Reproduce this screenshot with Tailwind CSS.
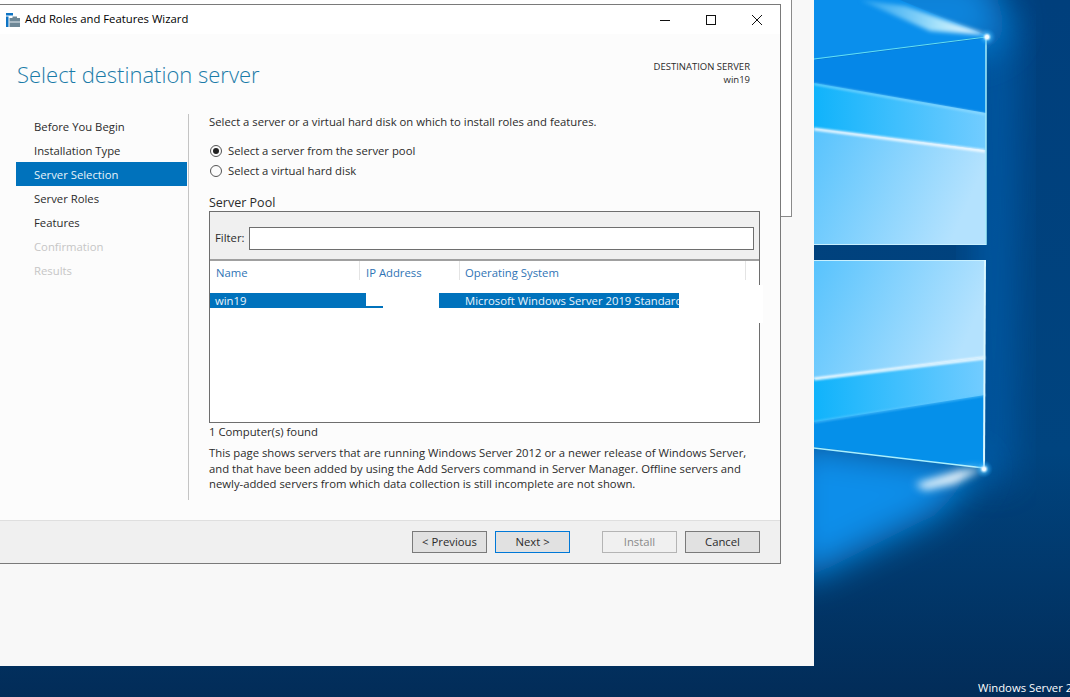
<!DOCTYPE html>
<html lang="en">
<head>
    <meta charset="UTF-8">
    <title>Add Roles and Features Wizard</title>
    <script src="https://cdn.jsdelivr.net/npm/@tailwindcss/browser@4"></script>
</head>
<body class="relative w-[1070px] h-[697px] overflow-hidden bg-[#02386f] font-['Open_Sans',sans-serif] text-[11.3px] text-[#2b2b2b]">

    <!-- Desktop wallpaper -->
    <svg class="absolute inset-0" width="1070" height="697" viewBox="0 0 1070 697">
        <defs>
            <linearGradient id="base" x1="0" y1="0" x2="0" y2="1">
                <stop offset="0" stop-color="#003f7c"/>
                <stop offset="0.65" stop-color="#00447f"/>
                <stop offset="1" stop-color="#022c58"/>
            </linearGradient>
            <linearGradient id="band2" x1="0" y1="0" x2="1" y2="0">
                <stop offset="0" stop-color="#10b3fb"/>
                <stop offset="1" stop-color="#72ccff"/>
            </linearGradient>
            <linearGradient id="band3" x1="0" y1="0" x2="1" y2="0.3">
                <stop offset="0" stop-color="#58c3fd"/>
                <stop offset="1" stop-color="#b4e2fe"/>
            </linearGradient>
            <linearGradient id="streak" x1="0" y1="0" x2="1" y2="0">
                <stop offset="0" stop-color="#4db8f5" stop-opacity="0.5"/>
                <stop offset="0.6" stop-color="#a6e2fb"/>
                <stop offset="1" stop-color="#ffffff"/>
            </linearGradient>
            <radialGradient id="flare" cx="0.5" cy="0.5" r="0.5">
                <stop offset="0" stop-color="#ffffff"/>
                <stop offset="0.2" stop-color="#e8f8ff"/>
                <stop offset="0.5" stop-color="#4cc0ff" stop-opacity="0.45"/>
                <stop offset="1" stop-color="#0a8de8" stop-opacity="0"/>
            </radialGradient>
            <filter id="blur30" x="-50%" y="-50%" width="200%" height="200%"><feGaussianBlur stdDeviation="18"/></filter>
            <filter id="blur6" x="-50%" y="-50%" width="200%" height="200%"><feGaussianBlur stdDeviation="4"/></filter>
            <filter id="blur2" x="-20%" y="-50%" width="140%" height="200%"><feGaussianBlur stdDeviation="2"/></filter>
            <filter id="blur1" x="-10%" y="-100%" width="120%" height="300%"><feGaussianBlur stdDeviation="1"/></filter>
        </defs>
        <rect width="1070" height="697" fill="url(#base)"/>
        <polygon points="976,20 1016,20 1010,480 976,480" fill="#0060b0" opacity="0.8" filter="url(#blur30)"/>

        <!-- glow above the upper pane and under the lower pane -->
        <polygon points="814,-30 985,-30 1010,30 986,50 814,70" fill="#0a84dc" filter="url(#blur30)"/>
        <polygon points="790,440 984,466 935,515 814,575 790,575" fill="#0a8eea" filter="url(#blur30)"/>

        <!-- upper pane -->
        <polygon points="814,0 900,0 988,36 814,60" fill="#0a8fec"/>
        <polygon points="860,0 905,6 988,35 930,31" fill="url(#streak)" filter="url(#blur2)"/>
        <polygon points="814,60 986,38 986,245 814,245" fill="#0587e8"/>
        <polygon points="814,83 986,113 986,150 814,128" fill="url(#band2)"/>
        <polygon points="814,128 986,150 986,245 814,245" fill="url(#band3)"/>
        <line x1="814" y1="59" x2="986" y2="37" stroke="#63e1f5" stroke-width="1"/>
        <line x1="814" y1="84" x2="985" y2="114" stroke="#a8e6ff" stroke-width="2" opacity="0.6" filter="url(#blur1)"/>
        <line x1="814" y1="129" x2="985" y2="151" stroke="#ffffff" stroke-width="3" opacity="0.85" filter="url(#blur1)"/>
        <line x1="986" y1="38" x2="986" y2="245" stroke="#a4ecfa" stroke-width="1.5"/>
        <line x1="814" y1="244.5" x2="986" y2="244.5" stroke="#c8f0ff" stroke-width="1"/>
        <circle cx="987" cy="37" r="9" fill="url(#flare)"/>

        <!-- lower pane -->
        <polygon points="814,260 985,260 985,468 814,447" fill="#0590ea"/>
        <polygon points="814,260 985,260 985,358 814,380" fill="url(#band3)"/>
        <polygon points="814,379 985,357 985,395 814,422" fill="url(#band2)"/>
        <line x1="814" y1="422" x2="985" y2="395" stroke="#5ec8ff" stroke-width="2" opacity="0.7" filter="url(#blur1)"/>
        <line x1="814" y1="379" x2="985" y2="358" stroke="#ffffff" stroke-width="3" opacity="0.9" filter="url(#blur1)"/>
        <line x1="814" y1="260.5" x2="985" y2="260.5" stroke="#c8f0ff" stroke-width="1"/>
        <line x1="985" y1="260" x2="984" y2="468" stroke="#d9f7ff" stroke-width="2"/>
        <line x1="814" y1="448" x2="984" y2="468" stroke="#a8f0ff" stroke-width="1.5"/>
        <polygon points="915,484 960,470 984,468 955,484 925,490" fill="#f2fbff" opacity="0.95" filter="url(#blur6)"/>
        <circle cx="984" cy="469" r="9" fill="url(#flare)"/>
    </svg>

    <div class="absolute left-[978px] top-[680px] text-white whitespace-nowrap">Windows Server 2</div>

    <!-- Server Manager behind -->
    <div class="absolute left-0 top-0 w-[814px] h-[666px] bg-[#f8f8f8]">
        <div class="absolute left-0 top-0 w-[792px] h-[217px] bg-white border-r border-b border-[#8a8a8a]"></div>
    </div>

    <!-- Wizard window -->
    <div class="absolute left-[-1px] top-[4px] w-[782px] h-[560px] flex flex-col bg-[#fcfcfc] border border-[#7a7a7a]">

        <div class="h-[29px] flex items-center bg-white shrink-0">
            <svg class="ml-[6px] w-[14px] h-[14px]" viewBox="0 0 14 14">
                <rect x="0" y="0" width="7" height="2.5" fill="#0f74c4"/>
                <rect x="0" y="3.5" width="2.5" height="10.5" fill="#0f74c4"/>
                <rect x="3.5" y="5" width="10.5" height="9" fill="#6d8796"/>
                <rect x="6.5" y="3.5" width="4.5" height="1.5" fill="#6d8796"/>
                <rect x="3.5" y="8.5" width="10.5" height="1" fill="#e8eef2"/>
            </svg>
            <span class="ml-[5px] text-black">Add Roles and Features Wizard</span>
            <div class="ml-auto flex items-center">
                <svg class="w-[46px] h-[30px]" viewBox="0 0 46 30"><path d="M18 15.5h10" stroke="#111" fill="none"/></svg>
                <svg class="w-[46px] h-[30px]" viewBox="0 0 46 30"><rect x="18.5" y="10.5" width="9" height="9" stroke="#111" fill="none"/></svg>
                <svg class="w-[46px] h-[30px]" viewBox="0 0 46 30"><path d="M18 10l10 10M28 10l-10 10" stroke="#111" fill="none"/></svg>
            </div>
        </div>

        <div class="flex-1 flex flex-col min-h-0">
            <div class="h-[80px] flex justify-between shrink-0">
                <h1 class="ml-[17px] mt-[25px] text-[22px] leading-[30px] font-light text-[#1a7ba8]">Select destination server</h1>
                <div class="mr-[30px] mt-[26px] text-right text-[9.5px] leading-[13px]">
                    <div>DESTINATION SERVER</div>
                    <div>win19</div>
                </div>
            </div>

            <div class="flex-1 flex min-h-0">
                <!-- Steps -->
                <div class="w-[189px] h-[386px] shrink-0 pl-[16px] border-r border-[#c4c4c4] mr-[20px]">
                    <div class="w-[171px]">
                        <div class="h-[24px] pl-[18px] leading-[26px]">Before You Begin</div>
                        <div class="h-[24px] pl-[18px] leading-[26px]">Installation Type</div>
                        <div class="h-[24px] pl-[18px] leading-[26px] bg-[#0072bc] text-[#e6f2fa]">Server Selection</div>
                        <div class="h-[24px] pl-[18px] leading-[26px]">Server Roles</div>
                        <div class="h-[24px] pl-[18px] leading-[26px]">Features</div>
                        <div class="h-[24px] pl-[18px] leading-[26px] text-[#c6c6c6]">Confirmation</div>
                        <div class="h-[24px] pl-[18px] leading-[26px] text-[#c6c6c6]">Results</div>
                    </div>
                </div>

                <!-- Page content -->
                <div class="w-[551px] flex flex-col">
                    <div class="leading-[16px]">Select a server or a virtual hard disk on which to install roles and features.</div>
                    <div class="mt-[11px] flex items-center h-[20px]">
                        <span class="ml-[1px] w-[12px] h-[12px] rounded-full border border-[#555] flex items-center justify-center"><span class="w-[6px] h-[6px] rounded-full bg-[#222]"></span></span>
                        <span class="ml-[6px]">Select a server from the server pool</span>
                    </div>
                    <div class="flex items-center h-[20px]">
                        <span class="ml-[1px] w-[12px] h-[12px] rounded-full border border-[#555]"></span>
                        <span class="ml-[6px]">Select a virtual hard disk</span>
                    </div>
                    <div class="mt-[13px] text-[12.5px] leading-[17px]">Server Pool</div>

                    <div class="relative h-[212px] border border-[#6e6e6e] bg-white flex flex-col">
                        <div class="h-[49px] shrink-0 bg-[#f0f0f0] border-b-2 border-[#a0a0a0] flex items-center pt-[6px] px-[5px]">
                            <span class="w-[34px]">Filter:</span>
                            <div class="flex-1 h-[23px] bg-white border border-[#6e6e6e]"></div>
                        </div>
                        <div class="h-[19px] flex text-[#2f74b5] relative">
                            <div class="w-[150px] pl-[6px] border-r border-[#e4e4e4] leading-[24px]">Name</div>
                            <div class="w-[100px] pl-[6px] border-r border-[#e4e4e4] leading-[24px]">IP Address</div>
                            <div class="w-[286px] pl-[5px] border-r border-[#e4e4e4] leading-[24px]">Operating System</div>
                        </div>
                        <!-- selected row, IP and end of the row blanked out in the source -->
                        <div class="mt-[13px] h-[15px] flex text-[#eaf4fb] leading-[15px]">
                            <div class="w-[156px] pl-[5px] bg-[#0072bc]">win19</div>
                            <div class="w-[17px] h-[15px] flex items-end"><div class="w-full h-[2px] bg-[#0072bc]"></div></div>
                            <div class="w-[56px]"></div>
                            <div class="w-[240px] pl-[26px] bg-[#0072bc] overflow-hidden whitespace-nowrap">Microsoft Windows Server 2019 Standard</div>
                        </div>
                        <div class="absolute right-[-4px] top-[73px] w-[8px] h-[38px] bg-white"></div>
                    </div>

                    <div class="leading-[18px]">1 Computer(s) found</div>
                    <p class="mt-[4px] leading-[15.5px] whitespace-nowrap">This page shows servers that are running Windows Server 2012 or a newer release of Windows Server,<br>and that have been added by using the Add Servers command in Server Manager. Offline servers and<br>newly-added servers from which data collection is still incomplete are not shown.</p>
                </div>
            </div>

            <!-- Footer buttons -->
            <div class="h-[43px] shrink-0 bg-[#f0f0f0] border-t border-[#dfdfdf] flex items-start pt-[10px] pl-[412px]">
                <button class="w-[75px] h-[22px] bg-[#e1e1e1] border border-[#7a7a7a] leading-[20px]">&lt; Previous</button>
                <button class="ml-[8px] w-[75px] h-[22px] bg-[#e1e1e1] border border-[#0078d7] leading-[20px]">Next &gt;</button>
                <button class="ml-[32px] w-[75px] h-[22px] bg-[#f0f0f0] border border-[#b4b4b4] text-[#8a8a8a] leading-[20px]">Install</button>
                <button class="ml-[8px] w-[75px] h-[22px] bg-[#e1e1e1] border border-[#7a7a7a] leading-[20px]">Cancel</button>
            </div>
        </div>
    </div>
</body>
</html>
